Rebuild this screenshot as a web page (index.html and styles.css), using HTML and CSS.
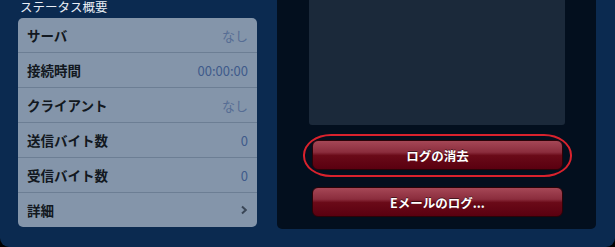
FILE: index.html
```html
<!DOCTYPE html>
<html lang="ja">
<head>
<meta charset="utf-8">
<link rel="stylesheet" href="styles.css">
</head>
<body>
<div class="screen">
  <section class="left">
    <div class="title">ステータス概要</div>
    <div class="card">
      <div class="row"><span class="label">サーバ</span><span class="value muted">なし</span></div>
      <div class="row"><span class="label">接続時間</span><span class="value">00:00:00</span></div>
      <div class="row"><span class="label">クライアント</span><span class="value muted">なし</span></div>
      <div class="row"><span class="label">送信バイト数</span><span class="value">0</span></div>
      <div class="row"><span class="label">受信バイト数</span><span class="value">0</span></div>
      <div class="row"><span class="label">詳細</span>
        <svg class="chev" width="8" height="10" viewBox="0 0 8 10"><path d="M2 1.5 L5.8 5 L2 8.5" fill="none" stroke="#3a4656" stroke-width="2"/></svg>
      </div>
    </div>
  </section>
  <section class="panel">
    <div class="log"></div>
    <div class="btn-wrap">
      <button class="btn">ログの消去</button>
      <span class="ring"></span>
    </div>
    <div class="btn-wrap second">
      <button class="btn">Eメールのログ...</button>
    </div>
  </section>
</div>
</body>
</html>
```

FILE: styles.css
```css
html, body {
  margin: 0;
  padding: 0;
}
body {
  width: 615px;
  height: 247px;
  overflow: hidden;
  background: #000;
  font-family: "Noto Sans CJK JP", "Noto Sans", sans-serif;
}
.screen {
  width: 615px;
  height: 247px;
  background: #0b2a50;
  border-radius: 0 0 9px 9px;
  display: flex;
  align-items: flex-start;
}
.left {
  width: 239px;
  margin-left: 18px;
}
.title {
  height: 18px;
  line-height: 13px;
  font-size: 12.5px;
  color: #e9eef5;
  padding-left: 2px;
  white-space: nowrap;
}
.card {
  background: #8495aa;
  border-radius: 5px;
  overflow: hidden;
}
.row {
  height: 35px;
  box-sizing: border-box;
  display: flex;
  align-items: center;
  justify-content: space-between;
  padding: 0 9px 0 9px;
  border-top: 1px solid #6c7e94;
}
.row:first-child {
  border-top: none;
  height: 34px;
}
.label {
  font-size: 13.5px;
  font-weight: bold;
  color: #121820;
}
.value {
  font-size: 13px;
  color: #3f5a8a;
}
.value.muted {
  color: #566d94;
}
.panel {
  width: 319px;
  height: 229px;
  box-sizing: border-box;
  margin-left: 20px;
  background: #030f1e;
  border-radius: 0 0 5px 5px;
  padding: 0 31px 0 32px;
  display: flex;
  flex-direction: column;
}
.log {
  height: 125px;
  background: #1b293a;
  border-radius: 0 0 3px 3px;
}
.btn-wrap {
  position: relative;
  margin: 15px 2px 0 3px;
  height: 30px;
}
.btn-wrap.second {
  margin-top: 17px;
}
.btn {
  width: 100%;
  height: 30px;
  border: 1px solid #2a0308;
  border-radius: 6px;
  background: linear-gradient(#a54756 0%, #8b2d3d 40%, #6a0a18 52%, #5a0010 100%);
  color: #fff;
  font-family: "Noto Sans CJK JP", "Noto Sans", sans-serif;
  font-size: 12.5px;
  font-weight: bold;
  text-shadow: 0 -1px 0 rgba(0,0,0,0.5);
  padding: 0;
  box-sizing: border-box;
}
.ring {
  position: absolute;
  left: -9px;
  right: -9px;
  top: -6px;
  bottom: -7px;
  border: 2px solid #d9222d;
  border-radius: 28px / 21px;
  pointer-events: none;
}
```
